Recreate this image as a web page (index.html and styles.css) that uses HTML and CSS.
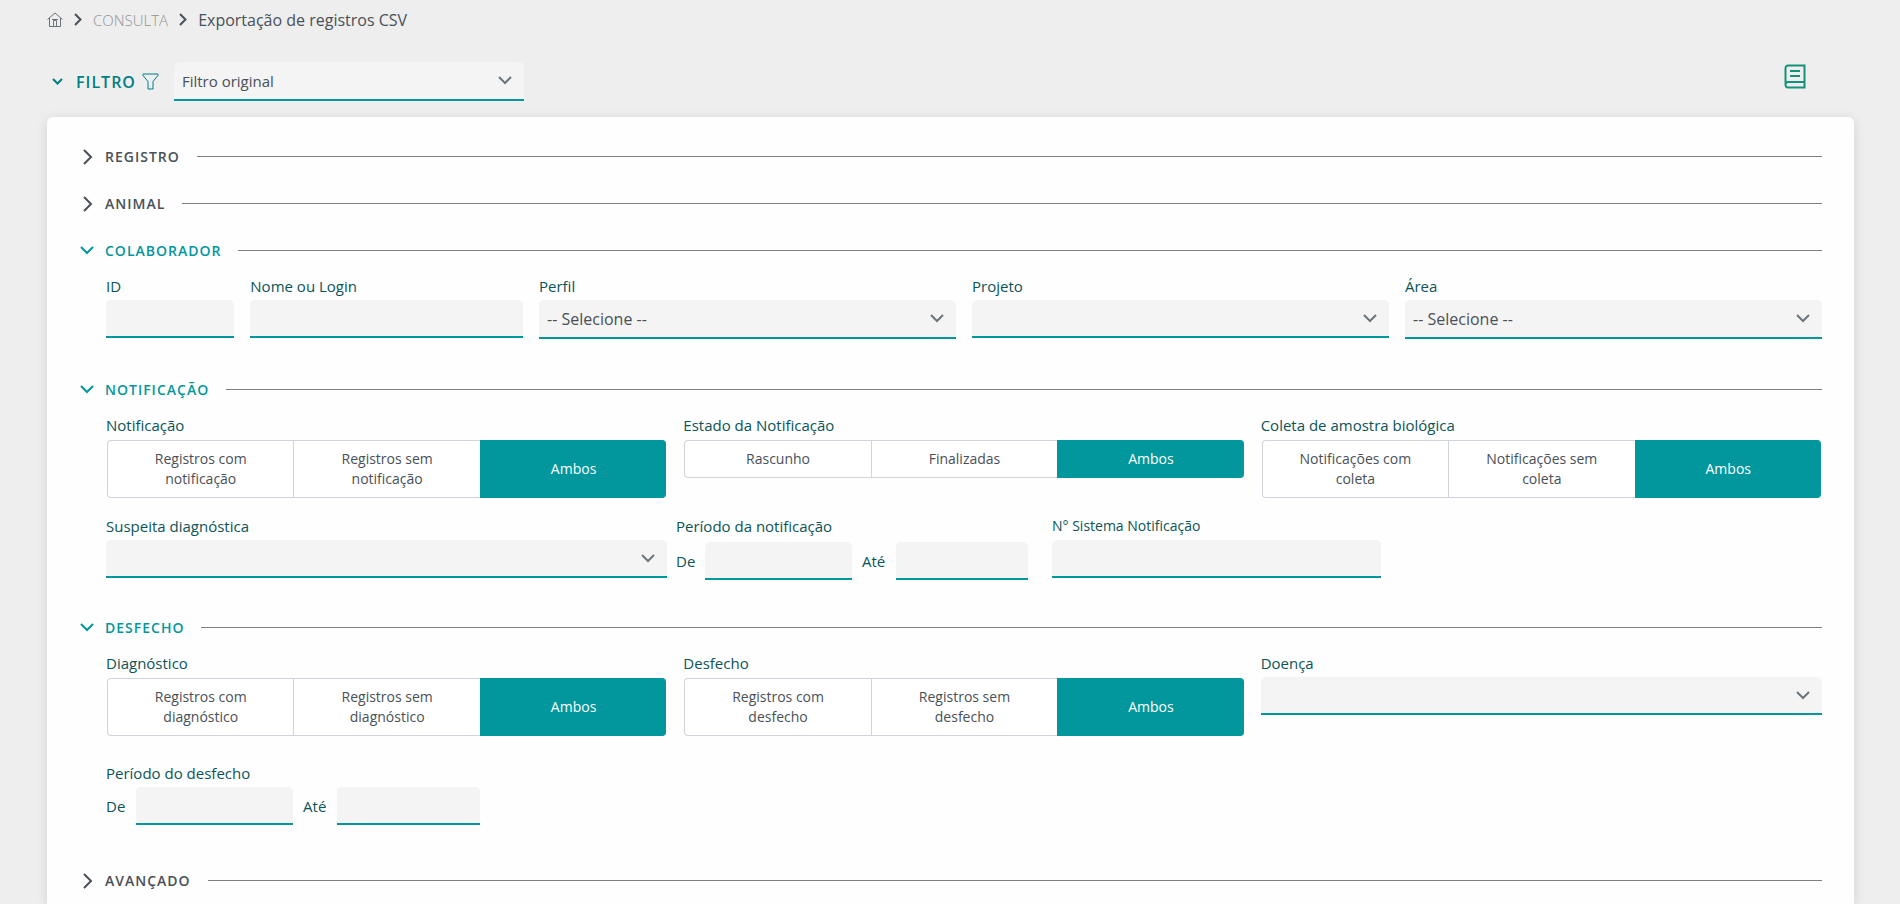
FILE: index.html
```html
<!DOCTYPE html>
<html lang="pt-BR">
<head>
<meta charset="utf-8">
<title>Exportação de registros CSV</title>
<link rel="stylesheet" href="styles.css">
</head>
<body>
<svg class="defs" aria-hidden="true">
  <symbol id="down" viewBox="0 0 14 9"><path d="M1 1l6 6 6-6"/></symbol>
  <symbol id="right" viewBox="0 0 10 16"><path d="M1 1l7 7-7 7"/></symbol>
</svg>

<nav class="crumbs" aria-label="Trilha">
  <a class="crumb-home" href="#" aria-label="Início"><svg width="16" height="15" viewBox="0 0 16 15"><path d="M.5 7.500L8 1l7.500 6.500M2.500 6v8.500h11V6M6.500 14V8.500h3V14M5 7.500h6"/></svg></a>
  <svg class="crumb-sep" width="8" height="13" viewBox="0 0 8 13"><path d="M1 1l5.500 5.500L1 12"/></svg>
  <a class="crumb-link" href="#">CONSULTA</a>
  <svg class="crumb-sep" width="8" height="13" viewBox="0 0 8 13"><path d="M1 1l5.500 5.500L1 12"/></svg>
  <span class="crumb-current">Exportação de registros CSV</span>
</nav>

<header class="toolbar">
  <button class="filter-toggle" type="button">
    <svg width="11" height="7" viewBox="0 0 11 7"><path d="M1 1l4.500 4.500L10 1"/></svg>
    <span>FILTRO</span>
    <svg class="funnel" width="17" height="17" viewBox="0 0 17 17"><path d="M1 1h15v1.500l-5 6V16H6V8.500l-5-6z"/></svg>
  </button>
  <div class="select filter-select">
    <select aria-label="Filtro"><option>Filtro original</option></select>
    <svg><use href="#down"/></svg>
  </div>
  <button class="book" type="button" aria-label="Manual">
    <svg width="22" height="25" viewBox="0 0 22 25"><path d="M4 1.500h16.500v22H4a2.500 2.500 0 0 1-2.500-2.500V4A2.500 2.500 0 0 1 4 1.500zM1.500 20.500A2.500 2.500 0 0 1 4 18h16.500M6 7h10M6 12h10"/></svg>
  </button>
</header>

<main class="panel">
  <h2 class="head"><button type="button"><svg class="ico-right"><use href="#right"/></svg>REGISTRO</button></h2>
  <h2 class="head"><button type="button"><svg class="ico-right"><use href="#right"/></svg>ANIMAL</button></h2>

  <h2 class="head open"><button type="button"><svg><use href="#down"/></svg>COLABORADOR</button></h2>
  <section class="body body-colab">
    <div class="grid">
      <div class="field c1"><label for="id">ID</label><input id="id" type="text"></div>
      <div class="field c2"><label for="nome">Nome ou Login</label><input id="nome" type="text"></div>
      <div class="field c3"><label for="perfil">Perfil</label><div class="select tall"><select id="perfil"><option>-- Selecione --</option></select><svg><use href="#down"/></svg></div></div>
      <div class="field c3"><label for="projeto">Projeto</label><div class="select"><select id="projeto"><option></option></select><svg><use href="#down"/></svg></div></div>
      <div class="field c3"><label for="area">Área</label><div class="select tall"><select id="area"><option>-- Selecione --</option></select><svg><use href="#down"/></svg></div></div>
    </div>
  </section>

  <h2 class="head open"><button type="button"><svg><use href="#down"/></svg>NOTIFICAÇÃO</button></h2>
  <section class="body body-notif">
    <div class="grid">
      <div class="field c4"><span class="label">Notificação</span>
        <div class="group" role="group" aria-label="Notificação"><button type="button">Registros com notificação</button><button type="button">Registros sem notificação</button><button type="button" class="on">Ambos</button></div></div>
      <div class="field c4"><span class="label">Estado da Notificação</span>
        <div class="group" role="group" aria-label="Estado da Notificação"><button type="button">Rascunho</button><button type="button">Finalizadas</button><button type="button" class="on">Ambos</button></div></div>
      <div class="field c4"><span class="label">Coleta de amostra biológica</span>
        <div class="group" role="group" aria-label="Coleta de amostra biológica"><button type="button">Notificações com coleta</button><button type="button">Notificações sem coleta</button><button type="button" class="on">Ambos</button></div></div>
    </div>
    <div class="row-notif">
      <div class="field"><label for="suspeita">Suspeita diagnóstica</label><div class="select"><select id="suspeita"><option></option></select><svg><use href="#down"/></svg></div></div>
      <div class="field period-col"><span class="label">Período da notificação</span>
        <div class="period period-notif"><label for="n-de">De</label><input id="n-de" type="text"><label for="n-ate">Até</label><input id="n-ate" type="text"></div></div>
      <div class="field system-col"><label class="small" for="sistema">N° Sistema Notificação</label><input id="sistema" type="text"></div>
    </div>
  </section>

  <h2 class="head open"><button type="button"><svg><use href="#down"/></svg>DESFECHO</button></h2>
  <section class="body body-desf">
    <div class="grid">
      <div class="field c4"><span class="label">Diagnóstico</span>
        <div class="group" role="group" aria-label="Diagnóstico"><button type="button">Registros com diagnóstico</button><button type="button">Registros sem diagnóstico</button><button type="button" class="on">Ambos</button></div></div>
      <div class="field c4"><span class="label">Desfecho</span>
        <div class="group" role="group" aria-label="Desfecho"><button type="button">Registros com desfecho</button><button type="button">Registros sem desfecho</button><button type="button" class="on">Ambos</button></div></div>
      <div class="field c4"><label for="doenca">Doença</label><div class="select"><select id="doenca"><option></option></select><svg><use href="#down"/></svg></div></div>
    </div>
    <div class="grid row-desf">
      <div class="field c4"><span class="label">Período do desfecho</span>
        <div class="period period-desf"><label for="d-de">De</label><input id="d-de" type="text"><label for="d-ate">Até</label><input id="d-ate" type="text"></div></div>
    </div>
  </section>

  <h2 class="head"><button type="button"><svg class="ico-right"><use href="#right"/></svg>AVANÇADO</button></h2>
</main>
</body>
</html>
```

FILE: styles.css
```css
* { box-sizing: border-box; }

body {
  display: flex;
  flex-direction: column;
  margin: 0;
  padding: 0 46px 0 47px;
  min-height: 100vh;
  background: #eee;
  color: #495057;
  font-family: "Open Sans", "Noto Sans", sans-serif;
  font-size: 15px;
  line-height: 24px;
}

button, input, select { font: inherit; color: inherit; margin: 0; }
button { background: none; border: 0; padding: 0; cursor: pointer; }
svg { fill: none; stroke: currentColor; stroke-width: 2; flex: none; display: block; }
a { text-decoration: none; }
.defs { display: none; }

/* Breadcrumb */
.crumbs { display: flex; align-items: center; height: 39px; }
.crumb-home { color: #6c757d; }
.crumb-home svg { stroke-width: 1; }
.crumb-sep { margin: 0 11px; }
.crumb-link { color: #909396; font-weight: 300; }
.crumb-current { font-size: 16px; }

/* Controls */
input, .select {
  width: 100%;
  height: 38px;
  background: #f4f4f4;
  border: 0;
  border-bottom: 2px solid #02979d;
  border-radius: 5px 5px 0 0;
}
input { padding: 0 8px; }
.select { position: relative; color: #495057; font-size: 16px; }
.select.tall { height: 39px; }
.select select {
  width: 100%;
  height: 100%;
  padding: 0 32px 0 8px;
  appearance: none;
  background: none;
  border: 0;
}
.select svg {
  position: absolute;
  right: 12px;
  top: 14px;
  width: 14px;
  height: 9px;
  color: #6c757d;
  pointer-events: none;
}

/* Filter bar */
.toolbar { display: flex; align-items: center; padding: 23px 48px 16px 5px; }
.filter-toggle {
  display: flex;
  align-items: center;
  color: #007f82;
  font-size: 16px;
  font-weight: 600;
  letter-spacing: 1px;
}
.filter-toggle span { margin: 0 6px 0 13px; }
.filter-toggle .funnel { stroke-width: 1; }
.select.filter-select { width: 350px; height: 39px; margin-left: 15px; font-size: 15px; }
.book { margin-left: auto; align-self: flex-start; padding-top: 2px; color: #169179; }

/* Panel */
.panel {
  flex: 1;
  padding: 16px 32px 0;
  background: #fefefe;
  border-radius: 6px 6px 0 0;
  box-shadow: 0 2px 12px rgba(0, 0, 0, .12);
}

.head {
  display: flex;
  align-items: center;
  margin: 0;
  height: 47px;
  font-size: 14px;
  font-weight: 600;
}
.head::after { content: ""; flex: 1; height: 1px; margin-left: 17px; background: #808080; }
.head button { display: flex; align-items: center; letter-spacing: 1px; }
.head.open { color: #02979d; }
.head svg { width: 14px; height: 9px; margin: 0 11px 0 1px; }
.head .ico-right { width: 10px; height: 16px; margin: 0 12px 0 4px; }

.body { padding-left: 27px; color: #0b5457; }
.body-colab { min-height: 92px; }
.body-notif { min-height: 191px; }
.body-desf { min-height: 206px; }

.grid { display: grid; grid-template-columns: repeat(12, minmax(0, 1fr)); gap: 16px; align-items: start; }
.c1 { grid-column: span 1; }
.c2 { grid-column: span 2; }
.c3 { grid-column: span 3; }
.c4 { grid-column: span 4; }

.field { display: flex; flex-direction: column; gap: 2px; min-width: 0; }
.small { font-size: 14px; }

.group { display: grid; grid-template-columns: repeat(3, minmax(0, 1fr)); margin: 1px 1px 0; }
.group button {
  min-height: 38px;
  padding: 8px 30px;
  border: 1px solid #ced4da;
  border-right: 0;
  background: #fff;
  color: #495057;
  font-size: 14px;
  line-height: 20px;
}
.group button:first-child { border-radius: 4px 0 0 4px; }
.group .on { background: #02979d; border-color: #02979d; border-radius: 0 4px 4px 0; color: #fff; }

.row-notif { display: grid; grid-template-columns: 561fr 377fr 345fr 433fr; padding-top: 16px; align-items: start; }
.period-col { padding-left: 9px; }
.system-col { padding: 0 8px; }
.period { display: grid; align-items: center; }
.period-notif { grid-template-columns: 29px 147fr 44px 132fr; padding: 2px 16px 0 0; }
.period-desf { grid-template-columns: 30px 157fr 44px 143fr 187fr; }
.period label + input + label { padding-left: 10px; }
.row-desf { padding-top: 25px; }
```
